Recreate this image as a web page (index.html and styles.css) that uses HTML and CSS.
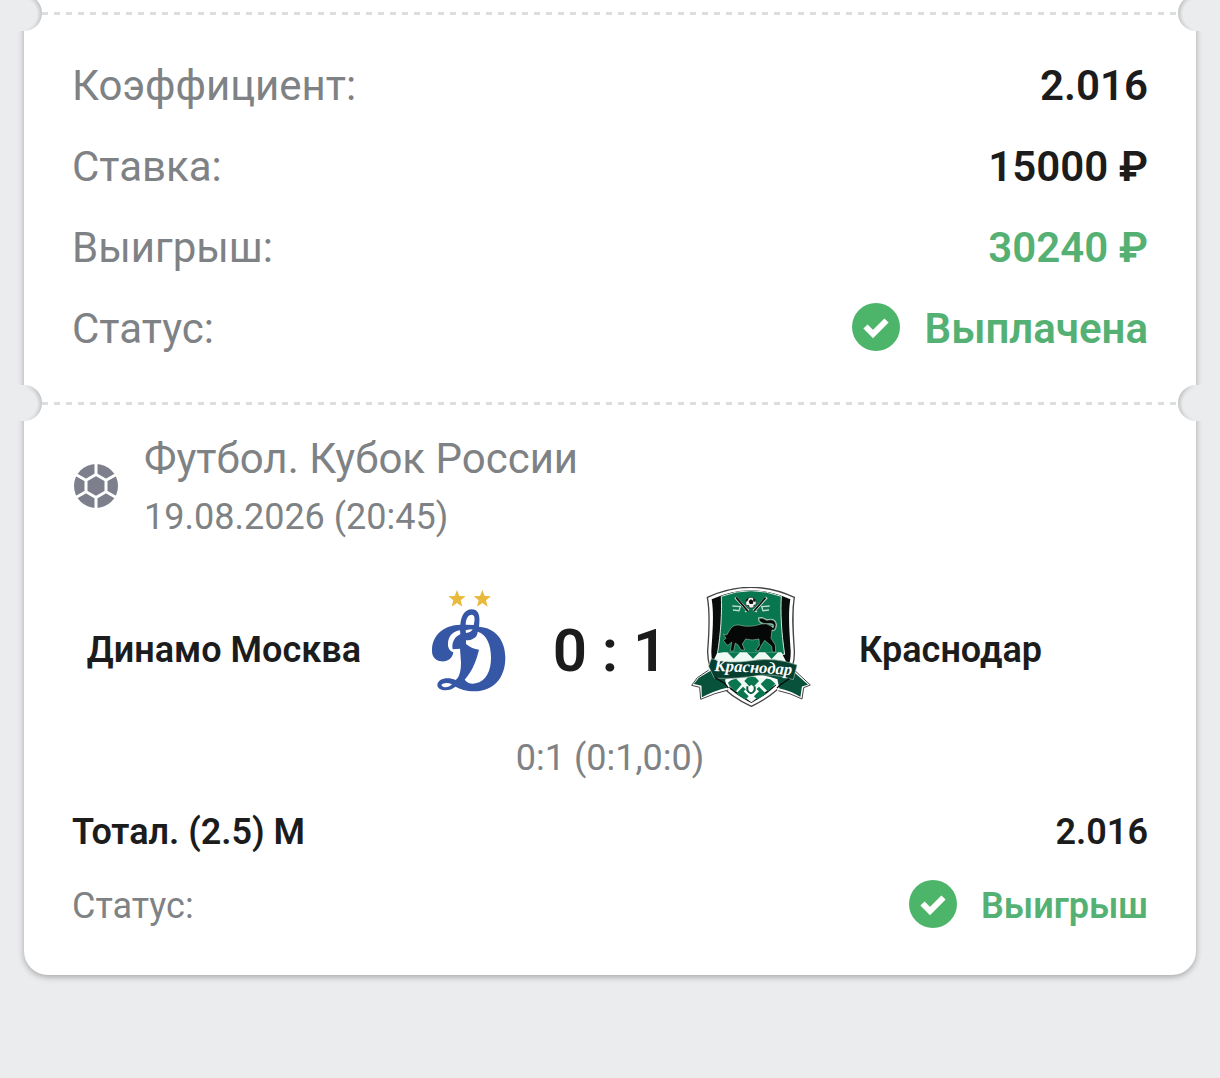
FILE: index.html
```html
<!DOCTYPE html>
<html lang="ru">
<head>
<meta charset="UTF-8">
<meta name="viewport" content="width=device-width, initial-scale=1">
<title>Купон</title>
<link rel="stylesheet" href="styles.css">
</head>
<body>
<main class="ticket">
  <div class="tear"></div>

  <dl class="summary">
    <div class="row"><dt>Коэффициент:</dt><dd>2.016</dd></div>
    <div class="row"><dt>Ставка:</dt><dd>15000 ₽</dd></div>
    <div class="row"><dt>Выигрыш:</dt><dd class="win">30240 ₽</dd></div>
    <div class="row">
      <dt>Статус:</dt>
      <dd class="win">
        <svg class="check" viewBox="0 0 48 48" aria-hidden="true"><circle cx="24" cy="24" r="24"/><path d="M13.500 23.500l7.500 7.500 13.500-13.500"/></svg>
        Выплачена
      </dd>
    </div>
  </dl>

  <div class="tear"></div>

  <section class="event">
    <header class="event-head">
      <svg class="ball" viewBox="0 0 48 48" aria-hidden="true">
        <circle cx="24" cy="24" r="22"/>
        <path d="M24 12.500l10 5.800v11.400l-10 5.800-10-5.800V18.300zM24 12.500V0M34 18.300L46 11.500M34 29.700l12 6.800M24 35.500V48M14 29.700L2 36.500M14 18.300L2 11.500"/>
      </svg>
      <div>
        <h1>Футбол. Кубок России</h1>
        <time datetime="2026-08-19T20:45">19.08.2026 (20:45)</time>
      </div>
    </header>

    <div class="match">
      <span class="team home">Динамо Москва</span>
      <svg class="logo" viewBox="-3 51 360 360" role="img" aria-label="Динамо">
        <g fill="#e9b93c">
          <path d="M141 60l7 18 19 1-15 12 5 19-16-11-16 11 5-19-15-12 19-1z"/>
          <path d="M217 60l7 18 19 1-15 12 5 19-16-11-16 11 5-19-15-12 19-1z"/>
        </g>
        <g fill="#3657a6">
          <path fill-rule="evenodd" d="M66 243C65 195 102 165 151 164C153 137 165 118 185 118C205 118 212 135 207 170C257 174 286 211 286 263C286 326 248 364 193 364C168 364 151 357 136 350C119 366 83 364 82 345C83 327 111 319 137 330C149 321 153 300 153 278L150 236L128 238C124 216 135 200 151 193L150 181C128 184 115 199 114 220C113 234 119 243 130 247C128 266 111 276 94 274C76 272 66 260 66 243Z
            M167 164L191 165C196 145 194 134 185 134C174 134 168 145 167 164Z
            M167 181L168 189C179 188 185 184 188 178C181 178 174 179 167 181Z
            M203 185C203 203 185 211 168 211L168 222C181 232 193 238 207 239C200 266 190 300 164 329C172 339 183 343 197 340C229 333 243 302 243 263C243 222 229 193 203 185Z
            M94 345C99 355 116 354 126 343C114 337 100 338 94 345Z"/>
        </g>
      </svg>
      <span class="score">0 : 1</span>
      <svg class="logo" viewBox="36 51 360 360" role="img" aria-label="Краснодар">
        <defs>
          <clipPath id="shield"><path d="M98 88Q216 34 334 88C327 130 331 181 335 242C338 321 277 366 217 399C157 366 95 321 97 242C101 181 105 130 98 88Z"/></clipPath>
          <path id="band" d="M106 303Q214 306 332 315"/>
        </defs>
        <path fill="#fff" stroke="#444" stroke-width="4" d="M85 82Q216 22 346 82C338 130 342 181 346 242C350 328 285 377 217 409C149 377 84 328 86 242C91 181 94 130 85 82Z"/>
        <g clip-path="url(#shield)">
          <path fill="#090d0b" d="M80 40h280v370H80z"/>
          <path fill="#08764e" stroke="#dce9e0" stroke-width="3" d="M127 79Q216 45 307 79C304 125 307 188 317 253H115C126 188 129 125 127 79Z"/>
          <path fill="#effaf4" d="M114 250L133 247H307L322 276L301 336L217 397L137 340L100 280Z"/>
          <g fill="#08764e">
            <path d="M145 247l19 19 19-19zM203 247l19 19 19-19zM258 247l20 20 19-20zM166 321l22 22-19 23-24-26zM208 320h20l12 13-22 23-22-23zM267 321l22 20-22 24-22-23zM192 350l23 22-19 21-25-22zM240 350l22 22-23 21-22-22z"/>
          </g>
          <path fill="#fff" d="M217 344l23 20-23 22-23-22z"/>
          <path fill="none" stroke="#086044" stroke-width="6" d="M205 349v12q11 18 22 0v-12"/>
        </g>
        <!-- football with crossed sabres -->
        <path fill="none" stroke="#dbe8df" stroke-width="8" d="M169 82l38 41M263 82l-38 41"/>
        <path fill="none" stroke="#c3d9cc" stroke-width="4" d="M160 108l24 2-4 12-18-2M272 108l-24 2 4 12 18-2M198 126l12-8M234 126l-12-8"/>
        <path fill="none" stroke="#111" stroke-width="5" d="M171 82l36 42M260 83l-35 40"/>
        <circle cx="216" cy="98" r="16" fill="#f1f6f2" stroke="#222" stroke-width="2"/>
        <path fill="#111" d="M209 93l7-5 8 5-3 9h-9zM202 88l7-5-2 8-7 6zM222 83l8 6-1 8-6-5zM202 105l8 1 2 7zM224 105l7-2-8 9z"/>
        <!-- bull -->
        <path fill="none" stroke="#a9cbb8" stroke-width="6" d="M277 169L282 174Q291 157 262 161Q239 160 240 145Q252 142 263 151Q288 144 291 164Q289 183 279 180"/>
        <path fill="#050807" stroke="#87b49a" stroke-width="2" d="M133 211L141 205L133 192L143 195L151 182Q160 163 180 165Q212 174 247 162Q263 157 277 169L282 174Q291 157 262 161Q239 160 240 145Q252 142 263 151Q288 144 291 164Q289 183 279 180L276 205L289 225L290 246L280 246L278 229L257 211L246 228L240 242L229 242L241 226L240 207Q219 213 200 207L190 222L197 240L186 240L178 226L169 219L164 243L154 243L158 216Q147 230 142 223Z"/>
        <path fill="#08513b" stroke="#fff" stroke-width="7" d="M93 299L57 321L38 344L64 350L65 388Q106 365 148 356L142 331Q218 304 292 330L298 358Q334 365 367 386L372 352L394 345L345 302Z"/>
        <path fill="none" stroke="#444" stroke-width="3" d="M89 300L55 323L38 346L62 352L65 388Q106 369 148 360M348 302L394 345L374 353L369 387Q334 369 298 362"/>
        <path fill="#063f30" stroke="#9db8aa" stroke-width="2" d="M97 266Q151 283 217 272Q291 261 354 285L343 329Q279 306 214 320Q156 328 106 325L89 289Z"/>
        <path fill="none" stroke="#08100d" stroke-width="4" d="M107 322L137 340L148 354M331 326L306 343L294 354"/>
        <text class="logo-name"><textPath href="#band">Краснодар</textPath></text>
      </svg>
      <span class="team">Краснодар</span>
    </div>

    <p class="periods">0:1 (0:1,0:0)</p>

    <dl class="bet">
      <div class="row"><dt class="pick">Тотал. (2.5) М</dt><dd>2.016</dd></div>
      <div class="row">
        <dt>Статус:</dt>
        <dd class="win">
          <svg class="check" viewBox="0 0 48 48" aria-hidden="true"><circle cx="24" cy="24" r="24"/><path d="M13.500 23.500l7.500 7.500 13.500-13.500"/></svg>
          Выигрыш
        </dd>
      </div>
    </dl>
  </section>
</main>
</body>
</html>
```

FILE: styles.css
```css
* {box-sizing:border-box;}
body {margin:0; background:#ebecee; color:#1c1c1c; font-family:Roboto, "Noto Sans", sans-serif; font-size:36px;}
h1, p, dl, dd {margin:0;}

.ticket {margin:-5px 24px 24px; padding-bottom:32px; background:#fff; border-radius:0 0 24px 24px; box-shadow:0 2px 6px rgba(0,0,0,.3);}

/* perforated line with a notch at each end */
.tear {position:relative; height:36px; padding:17px 18px 0; background:repeating-linear-gradient(90deg, #dcdddd 0 6px, transparent 6px 12px) content-box 0 0 / 100% 3px no-repeat;}
.tear::before, .tear::after {content:""; position:absolute; top:0; width:26px; height:36px;}
.tear::before {left:-8px; border-radius:0 18px 18px 0; background:linear-gradient(90deg, #ebecee 8px, transparent 22px), radial-gradient(circle at 7px 19px, #ebecee 14px, #c4c5c7 19px);}
.tear::after {right:-8px; border-radius:18px 0 0 18px; background:linear-gradient(270deg, #ebecee 8px, transparent 22px), radial-gradient(circle at 19px 19px, #ebecee 14px, #c4c5c7 19px);}

.row {display:flex; justify-content:space-between; align-items:center; height:74px;}
.row dt {color:#7e8285;}
.row dd {display:flex; align-items:center; gap:24px; font-weight:600;}
.row .win {color:#55b173;}
.row .pick {color:#1c1c1c; font-weight:600;}

.summary {padding:14px 48px 16px; font-size:42px;}
.summary .row {height:81px;}

.check {width:48px; height:48px; margin-bottom:4px; fill:#4db56a;}
.check path {fill:none; stroke:#fff; stroke-width:6px;}

.event {padding:8px 48px 0;}
.event-head {display:flex; align-items:center; gap:24px; color:#7e8285; line-height:59px;}
.event-head h1 {font-size:42px; font-weight:400;}
.event-head time {display:block;}
.ball {width:48px; height:48px; margin-bottom:4px; fill:#7d808c;}
.ball path {fill:none; stroke:#fff; stroke-width:3px;}

.match {display:grid; grid-template-columns:1fr 120px 162px 120px 1fr; align-items:center; margin-top:40px;}
.team {padding:6px 0 0 48px; font-weight:600;}
.home {padding:6px 48px 0 0; text-align:right;}
.score {padding-top:6px; font-size:60px; font-weight:600; text-align:center;}
.logo {width:120px; height:120px;}
.logo-name {font:italic bold 50px "Liberation Serif", serif; fill:#fff;}

.periods {margin-top:14px; color:#7e8285; line-height:74px; text-align:center;}
```
